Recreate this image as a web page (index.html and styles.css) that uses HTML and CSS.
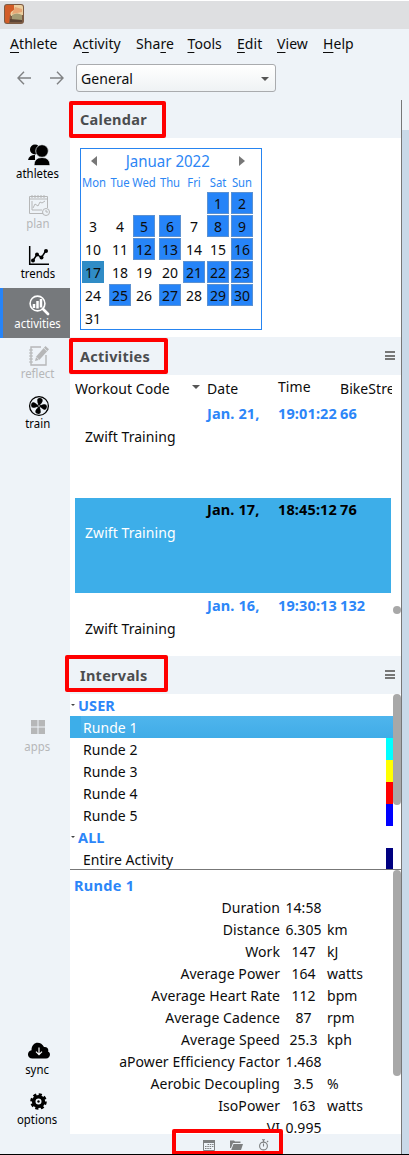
FILE: index.html
```html
<!DOCTYPE html>
<html lang="en">
<head>
<meta charset="utf-8">
<title>Activities</title>
<link rel="stylesheet" href="styles.css">
</head>
<body>
<div class="window">
  <div class="titlebar">
    <svg class="app-icon" width="20" height="20" viewBox="0 0 20 20"><rect width="20" height="20" rx="3" fill="#7c5b43"/><path d="M1 3Q1 1 3 1H12L10 7 6 11 5 19H3Q1 19 1 17Z" fill="#d25c27"/><path d="M10 1H17Q19 1 19 3V11L7 12Q5 8 10 6Z" fill="#edcf9f"/><path d="M11 3 18 5 18 8 8 10Z" fill="#e6a675"/><path d="M8 11Q13 8 18 11V17H8Z" fill="#a39b74"/><path d="M6 15 18 16V18H6Z" fill="#5c4434"/></svg>
  </div>
  <nav class="menu">
    <span class="m1"><u>A</u>thlete</span><span class="m2">A<u>c</u>tivity</span><span class="m3">Sha<u>r</u>e</span><span class="m4"><u>T</u>ools</span><span class="m5"><u>E</u>dit</span><span class="m6"><u>V</u>iew</span><span class="m7"><u>H</u>elp</span>
  </nav>
  <div class="toolbar">
    <svg width="14" height="14" viewBox="0 0 14 14" fill="none" stroke="#808284" stroke-width="1.4"><path d="M14 7H1M7 .7 1 7l6 6.3"/></svg>
    <svg class="forward" width="14" height="14" viewBox="0 0 14 14" fill="none" stroke="#808284" stroke-width="1.4"><path d="M0 7h13M7 .7 13 7l-6 6.3"/></svg>
    <div class="select"><span>General</span><i class="caret"></i></div>
  </div>
  <div class="body">
    <aside class="sidebar">
      <div class="tool"><svg width="24" height="24" viewBox="0 0 24 24"><circle cx="8" cy="6.5" r="5" /><path d="M1 17Q2 12 8 12V17Z"/><g stroke="#eef3f8" stroke-width=".7"><circle cx="15" cy="8" r="6.3"/><path d="M7 22.500Q7 14.500 15 14.500t8 8Z"/></g></svg><span>athletes</span></div>
      <div class="tool off"><svg width="24" height="24" viewBox="0 0 24 24" fill="none" stroke="currentColor"><path d="M16 20.500H2.500V3.500H20.500V15M2 6H21M5 2v3M8 2v3M11 2v3M14 2v3M17 2v3"/><path d="M5 8v9h10M6 15l2-4 3 2 2-4 2 1 3-2"/><circle cx="19" cy="19" r="3.500"/><path d="M19 17v2h2"/></svg><span>plan</span></div>
      <div class="tool"><svg width="24" height="24" viewBox="0 0 24 24" fill="none" stroke="currentColor" stroke-width="1.500"><path d="M2.700 3v18.300H22M6 17.500l4-6 4.500 3L19 7.500"/><g fill="currentColor" stroke="none"><circle cx="6" cy="17.500" r="2"/><circle cx="10" cy="11.500" r="2"/><circle cx="14.500" cy="14.500" r="2"/><circle cx="19" cy="8" r="2"/></g></svg><span>trends</span></div>
      <div class="tool active"><svg width="24" height="24" viewBox="0 0 24 24" fill="none" stroke="currentColor"><circle cx="10.500" cy="10.500" r="7.400" stroke-width="1.600"/><path d="M7 15V11M10.500 15.500V8M14 14.500V6" stroke-width="2.500"/><path d="m16 16 5 5" stroke-width="2.700" stroke-linecap="round"/></svg><span>activities</span></div>
      <div class="tool off"><svg width="24" height="24" viewBox="0 0 24 24" fill="none" stroke="currentColor"><path d="M14 4H4V22H19V12" stroke-width="1.400"/><path d="M2 7h4M2 10h4M2 13h4M2 16h4M2 19h4"/><path d="m8 18 1.200-4.500L18.500 3 22 6.300 12.500 16.700Z" fill="currentColor" stroke="none"/><path d="m16.500 4.500 3.500 3.700M9.200 14l2.800 2.800" stroke="#eef3f8" stroke-width=".7"/></svg><span>reflect</span></div>
      <div class="tool"><svg width="24" height="24" viewBox="0 0 24 24"><circle cx="12" cy="13" r="9.400" fill="none" stroke="currentColor" stroke-width="1.300"/><g fill="currentColor" transform="translate(0 1)"><path id="fan" d="M12 11Q10 9 10.300 6.800 10 4.200 12.600 4.100 16.400 4.300 15.500 7.400 15 9.500 12 11Z"/><use href="#fan" transform="rotate(90 12 12)"/><use href="#fan" transform="rotate(180 12 12)"/><use href="#fan" transform="rotate(270 12 12)"/><circle cx="12" cy="12" r="2"/></g><circle cx="12" cy="13" r=".8" fill="#eef3f8"/></svg><span>train</span></div>
      <div class="tool off apps"><svg width="24" height="24" viewBox="0 0 24 24" fill="currentColor"><path d="M4 4h6.500v6.500H4zM11.500 4H18v6.500h-6.500zM4 11.500h6.500V18H4zM11.500 11.500H18V18h-6.500z"/></svg><span>apps</span></div>
      <div class="tool sync"><svg width="24" height="24" viewBox="0 0 24 24"><path d="M5.500 19.500C-.5 19.500-.2 12 4.500 11.300 4.500 2 14 1.500 17 8c3.500-.5 5 2.500 4 4.500 3.500 1.500 2 7-2 7Z"/><path d="M12 8.500v7M9 12.700l3 3 3-3" fill="none" stroke="#fff" stroke-width="1.200"/></svg><span>sync</span></div>
      <div class="tool"><svg width="24" height="24" viewBox="0 0 24 24" fill="none" stroke="currentColor"><circle cx="11.500" cy="12.500" r="4.800" stroke-width="3.600"/><circle cx="11.500" cy="12.500" r="7" stroke-width="2.600" stroke-dasharray="3.100 2.398"/><circle cx="11.500" cy="12.500" r="1.200" fill="currentColor" stroke="none"/></svg><span>options</span></div>
    </aside>
    <main class="panel">
      <header class="head head-cal">Calendar<i class="mark mark-cal"></i></header>
      <section class="calendar">
        <div class="month">
          <div class="month-title"><i class="prev"></i><span>Januar 2022</span><i class="next"></i></div>
          <div class="week names"><span>Mon</span><span>Tue</span><span>Wed</span><span>Thu</span><span>Fri</span><span>Sat</span><span>Sun</span></div>
          <div class="week"><b></b><b></b><b></b><b></b><b></b><b class="on">1</b><b class="on">2</b></div>
          <div class="week"><b>3</b><b>4</b><b class="on">5</b><b class="on">6</b><b>7</b><b class="on">8</b><b class="on">9</b></div>
          <div class="week"><b>10</b><b>11</b><b class="on">12</b><b class="on">13</b><b>14</b><b>15</b><b class="on">16</b></div>
          <div class="week"><b class="today">17</b><b>18</b><b>19</b><b>20</b><b class="on">21</b><b class="on">22</b><b class="on">23</b></div>
          <div class="week"><b>24</b><b class="on">25</b><b>26</b><b class="on">27</b><b>28</b><b class="on">29</b><b class="on">30</b></div>
          <div class="week"><b>31</b></div>
        </div>
      </section>
      <header class="head">Activities<i class="burger"></i><i class="mark mark-act"></i></header>
      <section class="activities">
        <div class="cols"><span>Workout Code</span><i class="caret"></i><span>Date</span><span class="time">Time</span><span>BikeStress</span></div>
        <div class="ride"><div class="when"><span>Jan. 21,</span><span>19:01:22</span><span>66</span></div><p>Zwift Training</p></div>
        <div class="ride chosen"><div class="when"><span>Jan. 17,</span><span>18:45:12</span><span>76</span></div><p>Zwift Training</p></div>
        <div class="ride"><div class="when"><span>Jan. 16,</span><span>19:30:13</span><span>132</span></div><p>Zwift Training</p></div>
        <i class="dot"></i>
      </section>
      <header class="head head-int">Intervals<i class="burger"></i><i class="mark mark-int"></i></header>
      <section class="intervals">
        <div class="rows">
          <div class="group"><i></i>USER</div>
          <div class="row sel">Runde 1</div>
          <div class="row">Runde 2<i class="cyan"></i></div>
          <div class="row">Runde 3<i class="yellow"></i></div>
          <div class="row">Runde 4<i class="red"></i></div>
          <div class="row">Runde 5<i class="blue"></i></div>
          <div class="group"><i></i>ALL</div>
          <div class="row">Entire Activity<i class="navy"></i></div>
        </div>
        <i class="bar bar-int"></i>
      </section>
      <section class="summary">
        <div class="stats">
          <h3>Runde 1</h3>
          <div class="stat"><span>Duration</span><span>14:58</span><span></span></div>
          <div class="stat"><span>Distance</span><span>6.305</span><span>km</span></div>
          <div class="stat"><span>Work</span><span>147</span><span>kJ</span></div>
          <div class="stat"><span>Average Power</span><span>164</span><span>watts</span></div>
          <div class="stat"><span>Average Heart Rate</span><span>112</span><span>bpm</span></div>
          <div class="stat"><span>Average Cadence</span><span>87</span><span>rpm</span></div>
          <div class="stat"><span>Average Speed</span><span>25.3</span><span>kph</span></div>
          <div class="stat"><span>aPower Efficiency Factor</span><span>1.468</span><span></span></div>
          <div class="stat"><span>Aerobic Decoupling</span><span>3.5</span><span>%</span></div>
          <div class="stat"><span>IsoPower</span><span>163</span><span>watts</span></div>
          <div class="stat"><span>VI</span><span>0.995</span><span></span></div>
        </div>
        <i class="bar bar-sum"></i>
      </section>
      <footer class="foot">
        <svg width="12" height="12" viewBox="0 0 12 12"><path d="M.5 1.500h11v10H.5zM.5 3.500h11" fill="none" stroke="#7d7f80"/><path d="M0 1h12v2.500H0z" fill="#7d7f80"/><path d="M4.500 5.500H11M2 7.500h9M2 9.500h7" stroke="#7d7f80" stroke-dasharray="1.500 .8"/></svg>
        <svg width="13" height="12" viewBox="0 0 13 12" fill="#7d7f80"><path d="M0 9V1.500h4l1 1h5.500V4H3L1 9ZM3.500 5H13l-2 6H1.200Z"/></svg>
        <svg width="12" height="12" viewBox="0 0 12 12" fill="none" stroke="#7d7f80" stroke-width="1.100"><circle cx="5.500" cy="7" r="3.900"/><path d="M4 .8h3M5.500 1v2M9 3l1.200-1.200M5.500 4.500V7.500"/></svg>
        <i class="mark mark-foot"></i>
      </footer>
    </main>
    <div class="edge"><i></i></div>
  </div>
</div>
</body>
</html>
```
FILE: styles.css
```css
* { box-sizing: border-box; }
body { margin: 0; background: #eef3f8; font: 14px/22px "Noto Sans", sans-serif; color: #0c0c0c; letter-spacing: .06px; }
i { display: block; font-style: normal; }
.window { width: 409px; height: 1155px; overflow: hidden; display: flex; flex-direction: column; border-bottom: 1px solid #000; }
.titlebar { height: 29px; background: #dedfe1; border-top: 1px solid #fff; padding: 3px 4px; }
.app-icon { display: block; }
.menu { height: 31px; padding: 4px 0 0 10px; display: flex; white-space: nowrap; }
.menu u { text-underline-offset: 3px; text-decoration-thickness: 1px; }
.m1 { width: 63px; } .m2 { width: 63px; } .m3 { width: 51.5px; } .m4 { width: 49.5px; } .m5 { width: 40px; } .m6 { width: 46px; }
.toolbar { height: 37px; display: flex; align-items: flex-start; padding: 4px 0 0 17px; }
.toolbar svg { margin-top: 7px; }
.forward { margin-left: 19px; }
.select { width: 200px; height: 28px; margin-left: 12px; border: 1px solid #a9abae; border-radius: 3px; background: linear-gradient(#fff, #eff2f4); display: flex; align-items: center; justify-content: space-between; padding: 1px 6px 0 4px; }
.caret { border: 4px solid transparent; border-top-color: #555; border-bottom: 0; }
.body { flex: 1; min-height: 0; display: flex; }
.sidebar { width: 70px; padding-top: 41px; display: flex; flex-direction: column; }
.tool { height: 50px; flex: none; display: flex; flex-direction: column; align-items: center; padding: 5px 0 0 5px; border-left: 0 solid #2684f8; color: #000; letter-spacing: 0; }
.tool svg { display: block; margin-right: -2px; }
.tool span { font-size: 12.5px; line-height: 14px; transform: scaleX(.91); }
.off { color: #b6b7b8; }
.active { background: #76797c; color: #fff; border-left-width: 3px; padding-left: 2px; }
.apps { margin-top: 273px; }
.sync { margin-top: 273px; }
.panel { width: 331px; display: flex; flex-direction: column; flex: none; }
.head { height: 38px; flex: none; display: flex; align-items: center; justify-content: space-between; padding: 0 6px 0 10px; font-size: 14.5px; letter-spacing: .27px; font-weight: 700; color: #4b4d4f; position: relative; }
.head-cal { height: 41px; padding-top: 3px; }
.burger { width: 10px; height: 9px; margin-top: -1px; border: solid #777; border-width: 2px 0; background: linear-gradient(#777, #777) center / 10px 2px no-repeat; }
.mark { position: absolute; border: 4px solid #f00; border-radius: 2px; z-index: 2; }
.mark-cal { left: -1px; top: 4px; width: 97px; height: 37px; }
.mark-act { left: -1px; top: 1px; width: 99px; height: 36px; }
.mark-int { left: -5px; top: -1px; width: 103px; height: 37px; }
.calendar { height: 199px; flex: none; background: #fff; padding: 10px; }
.month { width: 182px; height: 182px; border: 1px solid #2684f0; padding: 0 1px; letter-spacing: 0; }
.month-title { height: 25px; display: flex; align-items: center; color: #2c86f4; font-size: 16px; padding: 0 15px 2px 9px; justify-content: space-between; }
.month-title span { transform: scaleX(.94); }
.prev, .next { border: 5.5px solid transparent; border-right: 6px solid #777; border-left: 0; }
.next { border-left: 6px solid #777; border-right: 0; }
.week { display: grid; grid-template-columns: 27px 24px 26px 24px 24px 24px 22px; height: 23px; }
.names { height: 18px; line-height: 17px; font-size: 12px; color: #2c86f4; }
.names span { width: 22px; display: flex; justify-content: center; transform: scaleX(.94); }
.names span:first-child { padding-left: 2px; }
.week b { width: 22px; height: 22px; font-weight: 400; line-height: 23px; text-align: center; }
.week .on { background: #2684f8; border: 1px solid #5b91d2; line-height: 21px; }
.week .today { background: #308cc6; }
.activities { height: 281px; flex: none; background: #fff; padding-left: 5px; position: relative; overflow: hidden; }
.cols { display: grid; grid-template-columns: 117px 15px 71px 62px 52px; height: 27px; padding-top: 3px; white-space: nowrap; width: 317px; overflow: hidden; }
.cols .caret { margin-top: 7px; width: 8px; height: 4px; }
.time { margin-top: -2px; }
.ride { width: 316px; height: 96px; }
.when { display: grid; grid-template-columns: 71px 62px 51px; padding-left: 132px; height: 23px; line-height: 22px; font-weight: 700; font-size: 14.5px; letter-spacing: .13px; color: #2c86f8; white-space: nowrap; }
.ride p { margin: 0 0 0 10px; line-height: 24px; }
.chosen { background: #3daee9; color: #fff; height: 95px; margin-bottom: 1px; }
.chosen .when { color: #000; }
.dot { position: absolute; left: 323px; top: 231px; width: 8px; height: 8px; border-radius: 50%; background: #a8a8a8; }
.intervals { height: 176px; flex: none; background: #fff; border-bottom: 1px solid #777; display: flex; overflow: hidden; }
.rows { width: 323px; line-height: 24px; }
.group, .row { height: 22px; display: flex; justify-content: space-between; }
.group { color: #2c86f8; font-weight: 700; font-size: 14.5px; line-height: 22px; letter-spacing: .1px; justify-content: flex-start; gap: 3px; align-items: flex-start; }
.group i { margin: 10px 0 0 1px; border: 2px solid transparent; border-top-color: #444; border-bottom: 0; }
.row { padding-left: 13px; }
.row i { width: 7px; height: 22px; }
.sel { color: #fff; background: linear-gradient(90deg, #3daee9 11px, transparent 11px), linear-gradient(#4fb5ed, #40ace7); }
.cyan { background: #0ff; } .yellow { background: #ff0; } .red { background: #f00; } .blue { background: #00f; } .navy { background: #000080; }
.bar { width: 8px; border-radius: 4px; background: #a8a8a8; flex: none; }
.bar-int { height: 111px; }
.summary { height: 264px; flex: none; background: #fff; display: flex; overflow: hidden; }
.stats { width: 323px; padding-top: 5px; }
.stats h3 { margin: -1px 0 1px 4px; font-size: 14.5px; letter-spacing: .3px; line-height: 22px; color: #2c86f8; }
.stat { display: grid; grid-template-columns: 210px 47px 66px; height: 22px; white-space: nowrap; }
.stat span:nth-child(1) { text-align: right; }
.stat span:nth-child(2) { text-align: center; }
.bar-sum { height: 206px; }
.foot { height: 20px; flex: none; display: flex; align-items: flex-start; padding: 5px 0 0 133px; gap: 15px; position: relative; }
.mark-foot { left: 102px; top: -5px; width: 111px; height: 26px; }
.edge { flex: 1; margin-top: 3px; border-left: 1px solid #777; background: #c9d9e8; }
.edge i { height: 30px; background: #eef3f8; }
```
